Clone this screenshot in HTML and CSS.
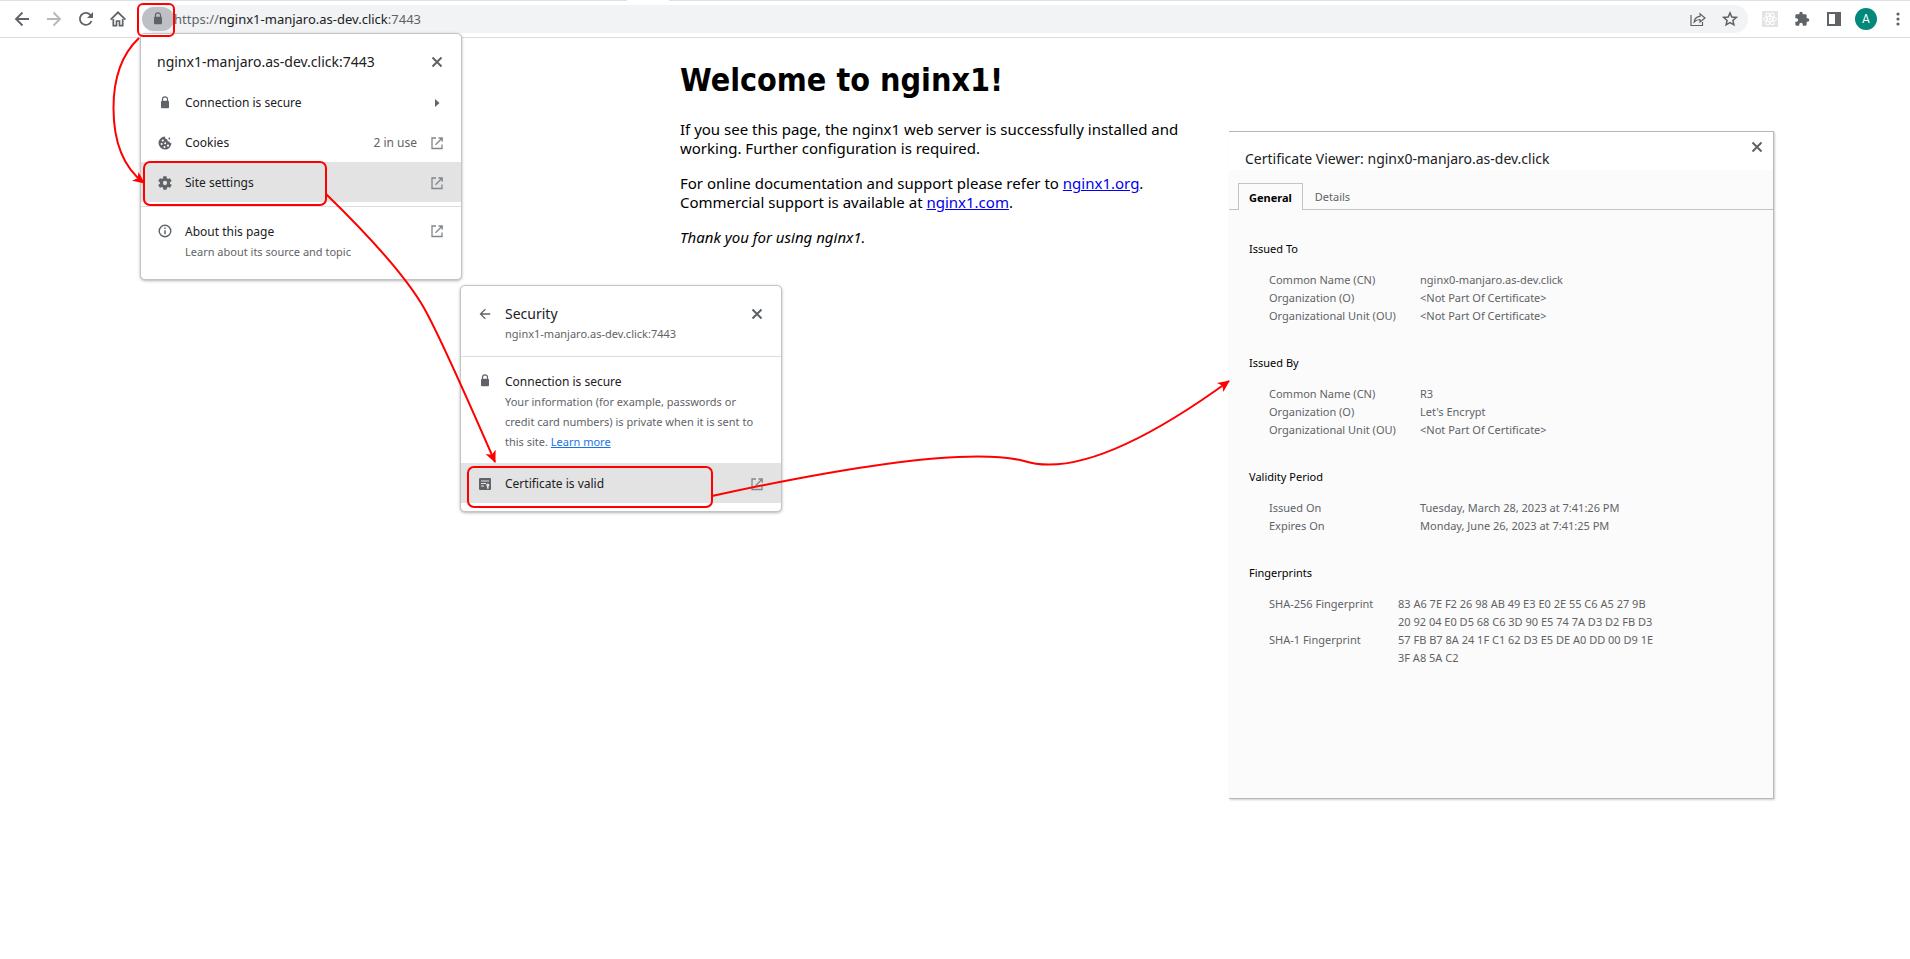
FILE: index.html
```html
<!DOCTYPE html>
<html lang="en">
<head>
<meta charset="utf-8">
<title>Welcome to nginx1!</title>
<link rel="stylesheet" href="styles.css">
</head>
<body>
<svg class="sprite" aria-hidden="true">
  <symbol id="lock" viewBox="0 0 16 16"><path d="M5.500 6V4.300a2.500 2.500 0 0 1 5 0V6" fill="none" stroke="currentColor" stroke-width="1.200"/><rect x="4" y="5.800" width="8" height="7.500" rx="1" fill="currentColor"/></symbol>
  <symbol id="launch" viewBox="0 0 16 16"><path d="M7 3H3v10.500h10V9.500M9.500 3H13.200V6.700M13 3.200L6.500 9.700" fill="none" stroke="currentColor" stroke-width="1.3"/></symbol>
  <symbol id="close" viewBox="0 0 16 16"><path d="M3.500 3.500L12.500 12.500M12.500 3.500L3.500 12.500" stroke="currentColor" stroke-width="2"/></symbol>
  <symbol id="back" viewBox="0 0 16 16"><path d="M15 8H2M8.500 1.500L2 8l6.500 6.500" fill="none" stroke="currentColor" stroke-width="1.8"/></symbol>
</svg>

<header class="toolbar">
  <div class="strip"><span class="strip-tab"></span></div>
  <nav class="bar" aria-label="Browser toolbar">
    <button class="tool" aria-label="Back"><svg class="icon"><use href="#back"/></svg></button>
    <button class="tool tool-off" aria-label="Forward"><svg class="icon flip"><use href="#back"/></svg></button>
    <button class="tool" aria-label="Reload"><svg class="icon" viewBox="0 0 16 16"><path d="M13.500 10A6 6 0 1 1 12.300 3.800L14 5.500" fill="none" stroke="currentColor" stroke-width="1.800"/><path d="M15 1v6H9z" fill="currentColor"/></svg></button>
    <button class="tool" aria-label="Home"><svg class="icon" viewBox="0 0 16 16"><path d="M3.300 8v6.700h3.200V10h3v4.700h3.200V8M.6 8.700L8 1.300l7.400 7.400" fill="none" stroke="currentColor" stroke-width="1.700"/></svg></button>
    <div class="omnibox">
      <button class="site-info" aria-label="View site information"><svg class="icon"><use href="#lock"/></svg></button>
      <span class="url">https://<b>nginx1-manjaro.as-dev.click</b>:7443</span>
      <button class="tool" aria-label="Share"><svg class="icon" viewBox="0 0 16 16"><path d="M1 4v10.500h11.500V11M4.200 11c.4-3.600 2.500-5.400 5.800-5.600V2.800L15 7l-5 4V8.500c-2.600 0-4.300.8-5.800 2.500z" fill="none" stroke="currentColor" stroke-width="1.200"/></svg></button>
      <button class="tool" aria-label="Bookmark this page"><svg class="icon" viewBox="0 0 16 16"><path d="M8 1.900l1.800 4.100 4.500.4-3.400 3 1 4.400L8 11.500l-3.900 2.300 1-4.400-3.400-3 4.500-.4z" fill="none" stroke="currentColor" stroke-width="1.500"/></svg></button>
    </div>
    <button class="tool tool-react" aria-label="React Developer Tools"><svg class="icon" viewBox="0 0 16 16"><rect width="16" height="16" fill="#e3e3e3"/><g fill="none" stroke="#fff"><ellipse cx="8" cy="8" rx="6.500" ry="2.600"/><ellipse cx="8" cy="8" rx="6.500" ry="2.600" transform="rotate(60 8 8)"/><ellipse cx="8" cy="8" rx="6.500" ry="2.600" transform="rotate(120 8 8)"/></g><circle cx="8" cy="8" r="1.300" fill="#fff"/></svg></button>
    <button class="tool" aria-label="Extensions"><svg class="icon" viewBox="0 0 24 24"><path fill="currentColor" d="M20.500 11H19V7c0-1.100-.9-2-2-2h-4V3.500a2.500 2.500 0 0 0-5 0V5H4c-1.100 0-2 .9-2 2v3.800h1.500a2.700 2.700 0 0 1 0 5.400H2V20c0 1.100.9 2 2 2h3.800v-1.500a2.700 2.700 0 0 1 5.400 0V22H17c1.100 0 2-.9 2-2v-4h1.500a2.500 2.500 0 0 0 0-5z"/></svg></button>
    <button class="tool" aria-label="Side panel"><svg class="icon" viewBox="0 0 16 16"><path fill="currentColor" fill-rule="evenodd" d="M1 1h14v14H1zM3 3v10h6V3z"/></svg></button>
    <button class="avatar" aria-label="Profile">A</button>
    <button class="tool tool-menu" aria-label="Menu"><svg class="icon" viewBox="0 0 16 16" fill="currentColor"><circle cx="8" cy="3" r="1.600"/><circle cx="8" cy="8" r="1.600"/><circle cx="8" cy="13" r="1.600"/></svg></button>
  </nav>
</header>

<main class="page">
  <h1>Welcome to nginx1!</h1>
  <p>If you see this page, the nginx1 web server is successfully installed and working. Further configuration is required.</p>
  <p>For online documentation and support please refer to <a href="#">nginx1.org</a>.<br>Commercial support is available at <a href="#">nginx1.com</a>.</p>
  <p><em>Thank you for using nginx1.</em></p>
</main>

<section class="popup site-popup" aria-label="Site information">
  <header class="popup-head">
    <h2>nginx1-manjaro.as-dev.click:7443</h2>
    <button class="tool" aria-label="Close"><svg class="icon"><use href="#close"/></svg></button>
  </header>
  <button class="row"><svg class="icon"><use href="#lock"/></svg><span class="label">Connection is secure</span><svg class="icon" viewBox="0 0 16 16"><path d="M6 4l4.500 4L6 12z" fill="currentColor"/></svg></button>
  <button class="row"><svg class="icon" viewBox="0 0 16 16"><path fill="currentColor" d="M8 1.500a6.500 6.500 0 1 0 6.500 6.600c-1 .2-1.900-.4-2-1.500-1.500.2-2.400-.8-2.100-2.200C8.700 4.200 7.900 3 8 1.500z"/><g fill="#fff"><circle cx="5.800" cy="5.500" r="1.100"/><circle cx="4.600" cy="9" r="1"/><circle cx="8.200" cy="8.300" r="1"/><circle cx="7.500" cy="12" r="1"/><circle cx="11" cy="10.700" r="1.100"/></g><circle cx="12.300" cy="3.500" r=".9" fill="currentColor"/></svg><span class="label">Cookies</span><span class="note">2 in use</span><svg class="icon launch"><use href="#launch"/></svg></button>
  <button class="row row-active"><svg class="icon" viewBox="0 0 24 24"><path fill="currentColor" d="M19.400 13a7.500 7.500 0 0 0 0-2l2.200-1.700c.2-.1.200-.4.100-.6l-2-3.500c-.1-.2-.4-.3-.6-.2l-2.600 1a7.700 7.700 0 0 0-1.700-1l-.4-2.600c0-.3-.2-.4-.5-.4h-4c-.2 0-.4.100-.5.400L9 5a8 8 0 0 0-1.700 1l-2.600-1c-.2-.1-.5 0-.6.200l-2 3.500c-.1.200 0 .5.100.6L4.400 11a7.500 7.500 0 0 0 0 2l-2.200 1.700c-.1.100-.2.400-.1.600l2 3.500c.1.200.4.300.6.200l2.600-1a7.700 7.700 0 0 0 1.700 1l.4 2.600c.1.300.3.400.5.400h4c.3 0 .5-.1.500-.4L15 19a8 8 0 0 0 1.700-1l2.600 1c.2.100.5 0 .6-.2l2-3.500c.1-.2.100-.5-.1-.6zM12 15.200a3.200 3.200 0 1 1 0-6.400 3.200 3.200 0 0 1 0 6.400z"/></svg><span class="label">Site settings</span><svg class="icon launch"><use href="#launch"/></svg></button>
  <hr>
  <button class="row row-about"><svg class="icon" viewBox="0 0 16 16"><circle cx="8" cy="8" r="5.800" fill="none" stroke="currentColor" stroke-width="1.400"/><path d="M8 7.200v4M8 4.600V6" stroke="currentColor" stroke-width="1.500"/></svg><span class="label">About this page<small>Learn about its source and topic</small></span><svg class="icon launch"><use href="#launch"/></svg></button>
</section>

<section class="popup security-popup" aria-label="Security">
  <header class="security-head">
    <button class="tool" aria-label="Back"><svg class="icon icon-back"><use href="#back"/></svg></button>
    <div class="label"><h2>Security</h2><small>nginx1-manjaro.as-dev.click:7443</small></div>
    <button class="tool" aria-label="Close"><svg class="icon"><use href="#close"/></svg></button>
  </header>
  <hr>
  <div class="security-body">
    <svg class="icon"><use href="#lock"/></svg>
    <div class="label">Connection is secure<small>Your information (for example, passwords or credit card numbers) is private when it is sent to this site. <a href="#">Learn more</a></small></div>
  </div>
  <button class="row row-active"><svg class="icon" viewBox="0 0 16 16"><rect x="2" y="2" width="12" height="12" rx="1" fill="currentColor"/><path d="M4 5h8M4 7.500h5M4 10h3" stroke="#e3e3e3" stroke-width="1.200"/><circle cx="10.800" cy="9" r="1.600" fill="#e3e3e3"/><path d="M10 10h1.600v3l-.8-.6-.8.6z" fill="#e3e3e3"/></svg><span class="label">Certificate is valid</span><svg class="icon launch"><use href="#launch"/></svg></button>
</section>

<section class="viewer" aria-label="Certificate Viewer">
  <header class="viewer-head">
    <h2>Certificate Viewer: nginx0-manjaro.as-dev.click</h2>
    <button class="tool" aria-label="Close"><svg class="icon"><use href="#close"/></svg></button>
  </header>
  <div class="tabs" role="tablist">
    <button class="tab tab-on" role="tab" aria-selected="true">General</button>
    <button class="tab" role="tab" aria-selected="false">Details</button>
  </div>
  <div class="viewer-body">
    <section>
      <h3>Issued To</h3>
      <dl>
        <dt>Common Name (CN)</dt><dd>nginx0-manjaro.as-dev.click</dd>
        <dt>Organization (O)</dt><dd>&lt;Not Part Of Certificate&gt;</dd>
        <dt>Organizational Unit (OU)</dt><dd>&lt;Not Part Of Certificate&gt;</dd>
      </dl>
    </section>
    <section>
      <h3>Issued By</h3>
      <dl>
        <dt>Common Name (CN)</dt><dd>R3</dd>
        <dt>Organization (O)</dt><dd>Let's Encrypt</dd>
        <dt>Organizational Unit (OU)</dt><dd>&lt;Not Part Of Certificate&gt;</dd>
      </dl>
    </section>
    <section>
      <h3>Validity Period</h3>
      <dl>
        <dt>Issued On</dt><dd>Tuesday, March 28, 2023 at 7:41:26 PM</dd>
        <dt>Expires On</dt><dd>Monday, June 26, 2023 at 7:41:25 PM</dd>
      </dl>
    </section>
    <section>
      <h3>Fingerprints</h3>
      <dl class="prints">
        <dt>SHA-256 Fingerprint</dt><dd>83 A6 7E F2 26 98 AB 49 E3 E0 2E 55 C6 A5 27 9B<br>20 92 04 E0 D5 68 C6 3D 90 E5 74 7A D3 D2 FB D3</dd>
        <dt>SHA-1 Fingerprint</dt><dd>57 FB B7 8A 24 1F C1 62 D3 E5 DE A0 DD 00 D9 1E<br>3F A8 5A C2</dd>
      </dl>
    </section>
  </div>
</section>

<svg class="notes" viewBox="0 0 1240 520" width="1240" height="520" aria-hidden="true">
  <defs><marker id="head" viewBox="0 0 12 12" refX="11" refY="6" markerWidth="12" markerHeight="12" markerUnits="userSpaceOnUse" orient="auto"><path d="M0 .5L12 6L0 11.500L3 6z" fill="#f00"/></marker></defs>
  <g fill="none" stroke="#f00" stroke-width="2">
    <rect x="138" y="4" width="36" height="32" rx="5"/>
    <rect x="144" y="162" width="182" height="43" rx="6"/>
    <rect x="468" y="467" width="244" height="40" rx="6"/>
    <path d="M139 38Q113.500 62 113.500 108Q113.500 160 144 183" marker-end="url(#head)"/>
    <path d="M326 194Q400 266 424 308Q440 336 495 462" marker-end="url(#head)"/>
    <path d="M712 496Q955 443 1024 461Q1090 482 1229 381" marker-end="url(#head)"/>
  </g>
</svg>
</body>
</html>
```
FILE: styles.css
```css
* { box-sizing: border-box; }

body {
  margin: 0;
  min-height: 100vh;
  position: relative;
  background: #fff;
  color: #202124;
  font: 12px/20px "Noto Sans", "Open Sans", sans-serif;
}

h1, h2, h3, p, dl, dd { margin: 0; }

button {
  margin: 0;
  padding: 0;
  border: 0;
  background: none;
  color: inherit;
  font: inherit;
  text-align: left;
}

hr {
  margin: 0;
  border: 0;
  border-top: 1px solid #dadce0;
}

small {
  display: block;
  color: #5f6368;
  font-size: 11px;
}

.sprite { display: none; }

.icon {
  display: block;
  width: 16px;
  height: 16px;
  flex: none;
  color: #5f6368;
}

.flip { transform: scaleX(-1); }
.icon-back { width: 12px; height: 12px; }
.launch { color: #80868b; }
.label { flex: 1; }
.note { color: #5f6368; }

.tool {
  display: flex;
  flex: none;
  justify-content: center;
  width: 16px;
}

.tool-off { opacity: .45; }

/* Browser toolbar */
.toolbar { border-bottom: 1px solid #dadce0; }

.strip {
  height: 1px;
  padding-left: 627px;
  background: #dee1e6;
}

.strip-tab {
  display: block;
  width: 42px;
  height: 1px;
  background: #fff;
}

.bar {
  display: flex;
  align-items: center;
  gap: 16px;
  height: 36px;
  padding: 0 4px 0 14px;
}

.omnibox {
  display: flex;
  flex: 1;
  align-items: center;
  gap: 16px;
  height: 28px;
  margin-right: -2px;
  padding-right: 10px;
  border-radius: 14px;
  background: #f1f3f4;
}

.site-info {
  display: flex;
  align-items: center;
  justify-content: center;
  width: 32px;
  height: 24px;
  border-radius: 12px;
  background: #bdc1c6;
}

.url {
  flex: 1;
  margin-left: -16px;
  color: #5f6368;
  font-size: 13px;
}

.url b {
  color: #202124;
  font-weight: 400;
}

.avatar {
  width: 22px;
  height: 22px;
  margin: 0 -3px;
  border-radius: 50%;
  background: #00897b;
  color: #fff;
  font: 12px/22px Roboto, sans-serif;
  text-align: center;
}

/* Welcome page */
.page {
  width: 550px;
  margin: 0 auto;
  padding-top: 23px;
  color: #000;
  font: 15px/19px "Noto Sans", sans-serif;
}

.page h1 {
  margin-bottom: 20px;
  font-family: "DejaVu Sans Condensed", "DejaVu Sans", sans-serif;
  font-size: 32px;
  line-height: 39px;
}

.page p { margin-bottom: 16px; }
.page a { color: #00e; }

/* Site information popups */
.popup {
  position: absolute;
  width: 322px;
  border: 1px solid #c4c4c4;
  border-radius: 5px;
  background: #fff;
  box-shadow: 0 1px 3px rgba(0, 0, 0, .3);
}

.popup h2, .viewer h2 {
  font-size: 14px;
  font-weight: 400;
  line-height: 20px;
}

.site-popup {
  top: 33px;
  left: 140px;
}

.popup-head {
  display: flex;
  align-items: center;
  justify-content: space-between;
  padding: 18px 16px 10px;
}

.row {
  display: flex;
  align-items: center;
  gap: 12px;
  width: 100%;
  min-height: 40px;
  padding: 2px 16px 0;
}

.row-active { background: #e3e3e3; }

.site-popup hr { margin-top: 4px; }

.row-about {
  align-items: flex-start;
  padding-top: 15px;
  padding-bottom: 17px;
}

.row-about .icon { margin-top: 1px; }

.security-popup {
  top: 285px;
  left: 460px;
  padding-bottom: 8px;
}

.security-head, .security-body {
  display: flex;
  align-items: flex-start;
  gap: 12px;
  padding: 18px 16px 12px;
}

.security-body { padding: 15px 18px 11px 16px; }

.security-head .tool, .security-head .icon-back { margin-top: 2px; }
.security-body .icon { margin-top: 1px; }
.security-popup a { color: #1a73e8; }

/* Certificate viewer */
.viewer {
  position: absolute;
  top: 131px;
  left: 1229px;
  width: 545px;
  min-height: 668px;
  border: solid #b8b8b8;
  border-width: 1px 1px 1px 0;
  background: #fbfbfb;
  box-shadow: 1px 1px 2px rgba(0, 0, 0, .2);
  font-size: 12px;
  line-height: 18px;
}

.viewer-head {
  display: flex;
  justify-content: space-between;
  padding: 7px 8px 1px 16px;
  background: #fff;
}

.viewer-head h2 { padding-top: 10px; }

.tabs {
  display: flex;
  align-items: flex-end;
  height: 40px;
  padding-left: 9px;
  border-bottom: 1px solid #c3c3c3;
}

.tab {
  height: 22px;
  padding: 0 12px 2px;
  color: #5f6368;
  font-size: 11px;
}

.tab-on {
  height: 27px;
  margin-bottom: -1px;
  padding: 2px 10px 0;
  border: 1px solid #c3c3c3;
  border-bottom: 0;
  background: #fbfbfb;
  color: #000;
  font-weight: 700;
}

.viewer-body {
  display: grid;
  gap: 29px;
  padding: 30px 20px;
  font-size: 11px;
}

.viewer h3 {
  margin-bottom: 13px;
  color: #000;
  font-size: 11px;
  font-weight: 400;
  line-height: 18px;
}

.viewer dl {
  display: grid;
  grid-template-columns: 151px 1fr;
  padding-left: 20px;
  color: #5f6368;
}

.viewer .prints { grid-template-columns: 129px 1fr; }

/* Callouts drawn over the windows */
.notes {
  position: absolute;
  top: 0;
  left: 0;
  pointer-events: none;
}
```
